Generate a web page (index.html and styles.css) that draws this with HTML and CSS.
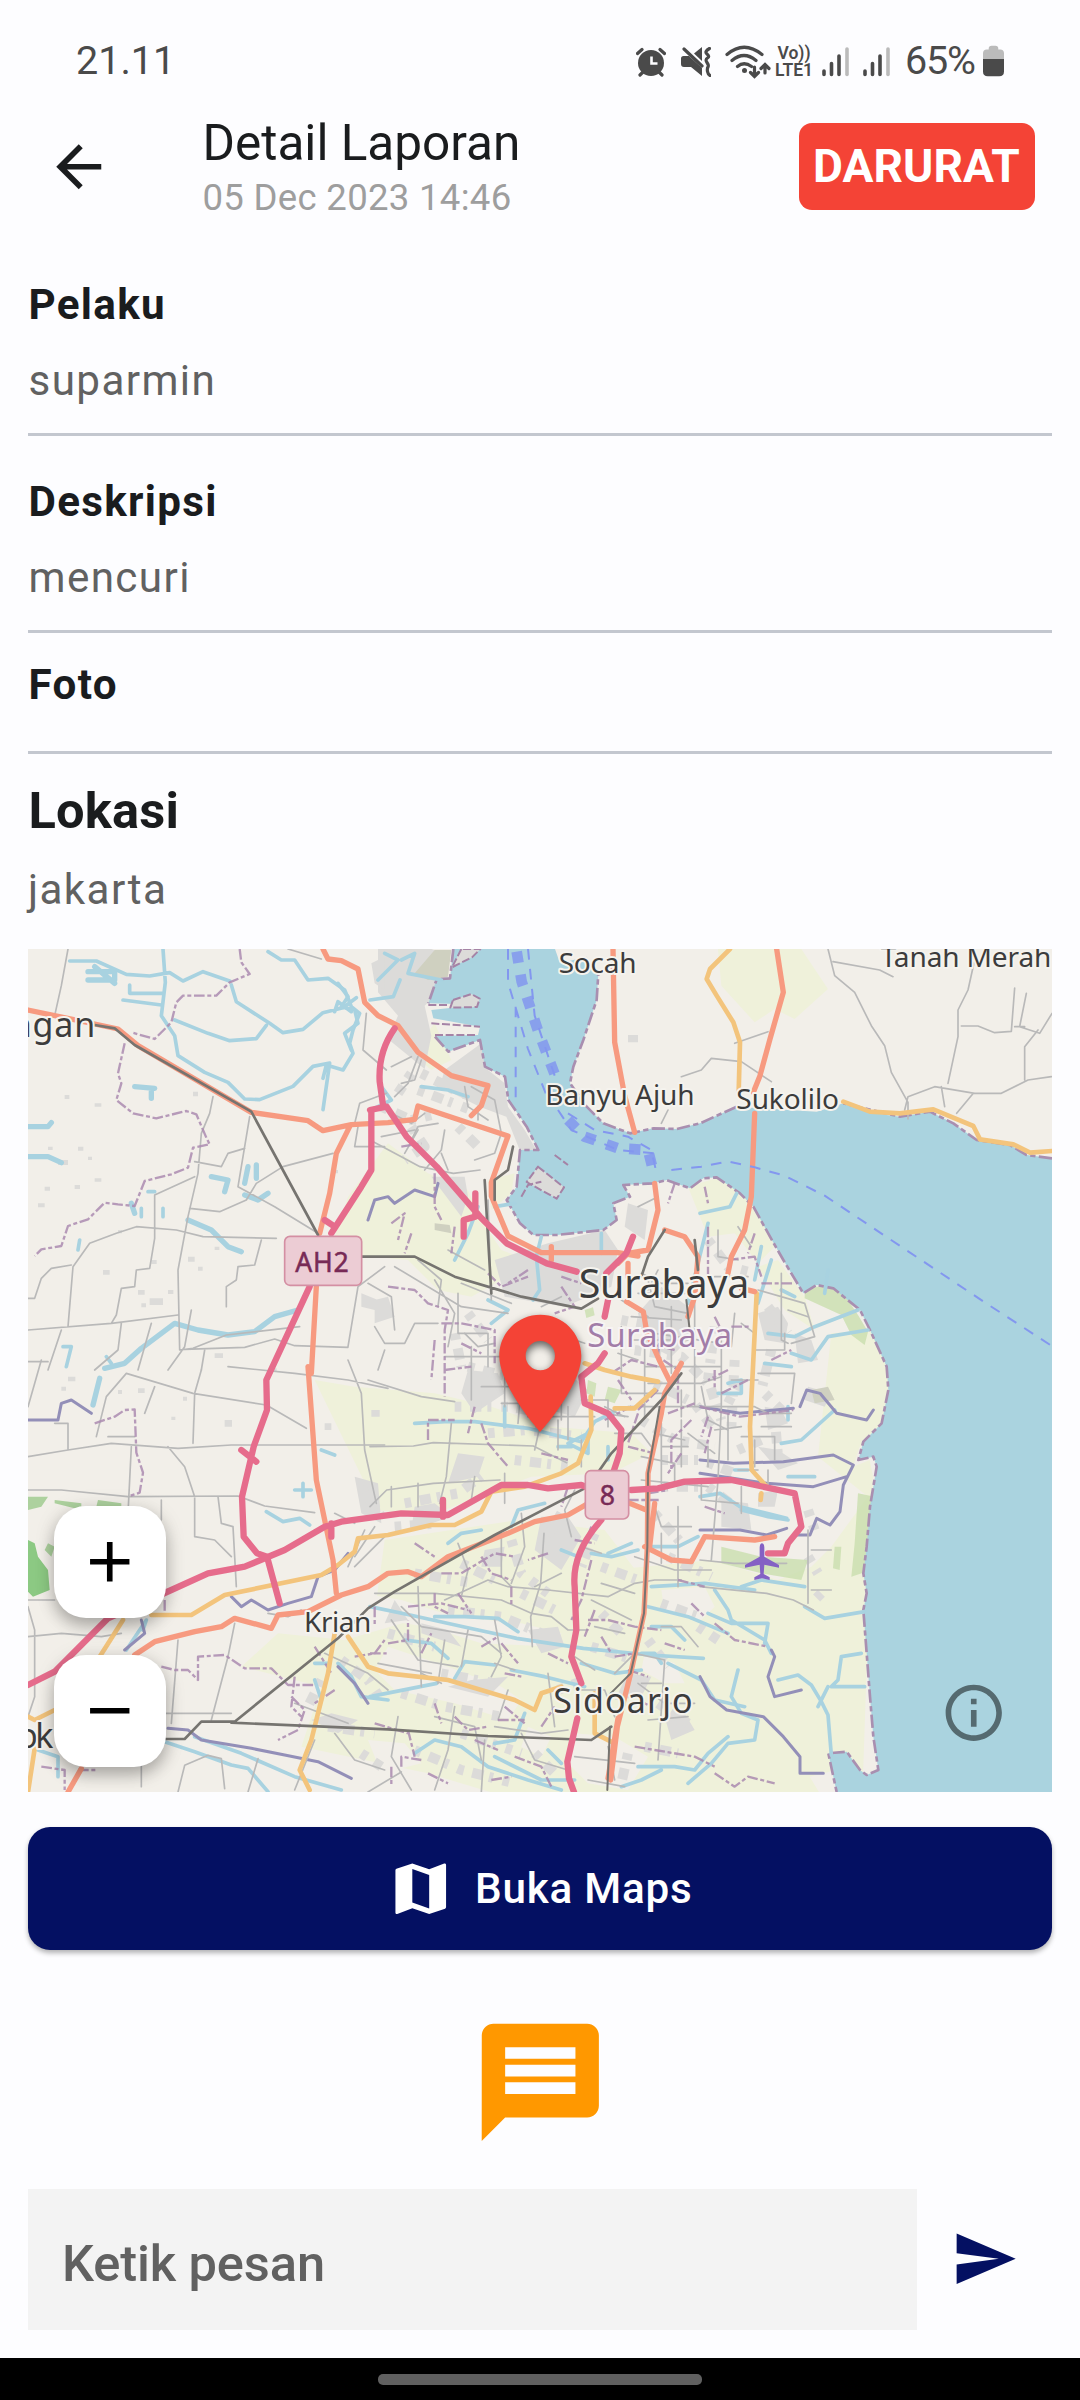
FILE: index.html
```html
<!DOCTYPE html>
<html lang="id">
<head>
<meta charset="utf-8">
<title>Detail Laporan</title>
<link rel="stylesheet" href="styles.css">
</head>
<body>
<div class="screen">
  <div class="status">
    <span class="clock">21.11</span>
    <div class="status-icons">
      <svg class="i-alarm" viewBox="0 0 30 30"><circle cx="15" cy="16" r="13"/><path class="ln" d="M1.500 6.500l4.500-4M28.500 6.500l-4.500-4M7 25l-3 3M23 25l3 3"/><path class="cut" d="M15.500 9.500v7h6"/></svg>
      <svg class="i-mute" viewBox="0 0 30 30"><path d="M0 11.500q0-2.500 2.500-2.500H8l13 12v8l-11-9H3q-3 0-3-3zM13 6.500L21 0v14z"/><path class="ln" d="M3 2l18 17"/><path class="ln" d="M28.500 1.500q-5.500 3-2.500 5.500t.5 4-.5 4.500 1 4.500-.5 4.500 2.500 4"/></svg>
      <svg class="i-wifi" viewBox="0 0 46 34"><path class="ln" d="M2 9.500Q19-5 37 9.500M7 15.500q12-10 24 0M12.500 21.500q6.500-5.500 14 0M29.500 22v9M25.500 27.500l4 4 4-4M40 28v-8M36 23.500l4-4 4 4"/><circle cx="19.500" cy="25.500" r="2.500"/></svg>
      <div class="volte"><span>Vo))</span><span>LTE1</span></div>
      <svg class="i-sig" viewBox="0 0 28 30"><path class="bar" d="M2 24v3.500M9.500 16.500v11M17 9v18.500"/><path class="bar dim" d="M25 2v25.500"/></svg>
      <svg class="i-sig second" viewBox="0 0 28 30"><path class="bar" d="M2 24v3.500M9.500 16.500v11M17 9v18.500"/><path class="bar dim" d="M25 2v25.500"/></svg>
      <span class="pct">65%</span>
      <svg class="i-bat" viewBox="0 0 22 32"><path fill="#bbb" d="M6 3q0-3 3-3h4q3 0 3 3v1h2q4 0 4 4v6H0V8q0-4 4-4h2z"/><path d="M0 14h22v13q0 5-5 5H5q-5 0-5-5z"/></svg>
    </div>
  </div>

  <header class="appbar">
    <svg class="back" viewBox="0 0 24 24"><path d="M20 11H7.830l5.590-5.590L12 4l-8 8 8 8 1.410-1.410L7.830 13H20v-2z"/></svg>
    <div class="titles"><h1>Detail Laporan</h1><p>05 Dec 2023 14:46</p></div>
    <span class="badge">DARURAT</span>
  </header>

  <main>
    <section class="field"><h2>Pelaku</h2><p>suparmin</p></section>
    <section class="field second"><h2>Deskripsi</h2><p>mencuri</p></section>
    <section class="field photo"><h2>Foto</h2></section>
    <section class="place"><h2>Lokasi</h2><p>jakarta</p></section>

    <div class="map">
      <svg class="tiles" viewBox="0 27 3072 2529" preserveAspectRatio="none">
        <rect y="27" width="3072" height="2529" fill="#f2efe9"/>
        <!-- farmland -->
        <g fill="#eff1da">
          <path d="M1080 610l120 90 120 50 40 90 60 90 80 30-80 60-90 50-100-20-90-90-220-20V890l40-120z"/>
          <path d="M860 1320l120 20 240 20 170 40 180 60 240 20 60 60-120 60-240 10-160 60-150 60-150-20z"/>
          <path d="M1220 250l50 110-60 30-60-50zM2070 27h250l80 120-100 90-60-30-60 40-100-110zM1380 720l80-20-10 60-60 50z"/>
          <path d="M2410 1180l120-10 50 120 5 80-30 90-60 60-20 60 50-20 10 50-30 900 20 40-30 30-70-90-80 20 30 50H1400l-200-60-380-80 60-180-240-60 110-100 200 20 240-70 300-150 260 10 300-30 200 60 100-40 60-60 110-150-150-120z"/>
          <path d="M1980 740l100-30 100 80 60 130-50 50-70-90-80 10zM2190 980l60-20 80 110 30 100-90-60zM1070 1800l400-60 260 30 100 130-40 200-420 40-330-120z"/>
        </g>
        <!-- unplanted land between the fields -->
        <g fill="#f2efe9">
          <path d="M1000 1960l120 20 160 50 200 20 120 30-20 40-220-10-160-50-210-30zM1080 2120l180 60 160 60 60 40-40 60-160-50-180-40-60-60zM1640 2380l120 10 100 60-60 100-120-20-60-60zM1500 2360l70 30-30 60-60-30zM1900 1950l130-10 30 60-40 40-110-20zM1850 2140l90 30 30 60-60 0-70-40zM1020 2400l110 10 50 60-120 30z"/>
        </g>
        <!-- built-up areas -->
        <g fill="#dcdbd9">
          <path d="M1050 27h160l50 20-10 90-60 60 20 90-20 100-110-90 30-70-60-70zM1250 390l110-80 20 80 50 40 10 70 50 70 35 60h-50l-40-100-80-30-120-60zM1210 710l100 0 10 60-20 60zM1400 960l160-50 170-40 40 60-20 110-140 60-180-30zM1520 680l90 60-25 35-90-55zM1800 790l60 20-10 90-60-40zM1270 45l60-10-40 50zM1290 190l60-20v30l-80 5z"/>
          <path d="M1900 1040l80 60 10 90-60 60-80-40-20-90zM2190 1120l60-20 30 50-10 60-60-10zM2300 1180l50 20 20 60-60 10zM2340 1340l70 20-20 40-60-20zM2210 1400l50 10 20 40-60 20zM2190 1520l60 10 60 40-60 20zM2080 1680l80 10 10 80-90-10zM2190 1660l60-10-10 50h-50zM1290 1540l80 10-20 60-90 20zM1160 1700l60-10 50 40-120 40zM1540 1730l80 0 40 60-60 100-80-60zM1370 1830l60-10-10 60h-60zM1500 2070l90-10 20 60-70 20zM1180 2080l120 40-40-50-80-20zM1330 2220l110-10-60 60-120-30zM1910 2330l60-10 30 50-70 30zM980 1610l70 20 10 120-60-30zM1320 1290l90 10 20 60-90 60-40-60zM1040 1080l40-10 20 60-60 20zM1000 1060l50 20-10 30-40-10zM1620 1300l60 50-40 80-110-30zM1800 2200l70 10-30 60-80 10zM850 2340l60-20 80 20-60 40zM1100 1980l40 60-70 10z"/>
          <path d="M1030 70l40-20v100l-30-20zM110 465h14v12h-14zM200 490h20v10h-20zM90 660h30v15H90zM150 620h16v12h-16zM200 715h20v10h-20zM495 455h15v14h-15zM480 950h20v15h-20zM225 990h20v14h-20zM330 1050h20v14h-20zM365 1075h40v20h-40zM560 1240h25v14h-25zM120 1310h22v14h-22zM330 1345h20v14h-20zM590 1440h22v20h-22zM890 1450h20v20h-20zM1030 1410h25v20h-25zM910 690h20v10h-20zM1800 285h30v22h-30zM50 740h16v12H50zM140 735h16v12h-16zM30 790h20v12H30zM180 650h12v10h-12zM60 620h14v10H60zM370 960h16v12h-16zM510 980h14v12h-14zM420 1050h16v12h-16zM340 1090h14v12h-14zM560 920h14v10h-14zM270 870h12v10h-12zM100 1340h14v12h-14zM270 1350h12v12h-12zM465 1370h12v12h-12zM430 1430h12v10h-12zM730 1285h16v10h-16z"/>
        </g>
        <!-- scattered settlements -->
        <g class="blots">
          <path d="M1180 400l120 60 90 20M1170 450l160 60M1060 500l90 40 80-20M1150 560l40 60-60 40M1290 560l60 60M1150 400l-40 60"/>
          <path d="M1320 1280l120 30 90 60M1280 1400l160 0 120 20M1380 1480l120-10 160 20M1460 1560l170 20M1280 1180l20 100M1320 1120l60 80"/>
          <path d="M1780 1140l100 20 60 60M1820 1230l140 20 80 80M1880 1330l120 60 60 80M1840 1440l100 60 120 20M1900 1560l120 0 100 40M1900 1640l140 0 80 60M2060 1160l-20 160 40 120M2120 1260l-10 200M2220 1100l60 80M2230 1230l-30 120 60 60M2240 1430l10 120M2040 900l60 80 80 20M2130 1530l70-30"/>
          <path d="M1000 1640l60 90M1130 1690l160-30 80-60M1100 1760l130-10M1450 1800l30 100 80 60M1600 1720l-60 100M1480 1960l120 60M1300 1870l120 60M1160 1900l180 30M1260 2010l160 20 120 50M1080 2080l140 40M1120 2260l130 40 170 30M1240 2200l160 30M1300 2380l180 60M1160 2430l140 60 160 40M1520 2440l60 60M1590 2250l80-30M940 2160l80 60 40 60M880 2220l-40 80M900 2360l140 20M1000 2440l60 40"/>
          <path d="M1700 1780l-40 100M1720 1880l110 40M1720 2020l60 60M1690 2120l130 40M1880 1720l90 100M1920 1850l130 60M1900 1990l110 40M1860 2100l60 80M1890 2290l90 60M1850 2420l100 20M2130 1330l-30 60M2340 1710l20 60M2340 1850l30 50M2380 1960l-20 20M1800 2440l-20 90M2010 2060l60 40"/>
        </g>
        <g fill="#c9dfae">
          <path d="M2330 1050l60-15 60 30 40 60 30 50-10 40-40-30-30-60-110-50zM2490 1660l50 10-10 220-60 20 10-100z" opacity=".8"/>
          <path opacity=".8" d="M2080 1820l120 30 140 10-20 60-120-20-120-30zM1680 1320l25 10-5 40-25-10zM1740 1340l40 10-20 40-30-10zM1670 1110l25-8 5 24-25 8zM2420 1820l20 0-5 70-20-5z"/>
        </g>
        <path fill="#cfd0c0" d="M1160 100l60-70h50l-10 80-60 10zM1220 850l45 5 5 25-50-10zM2350 1350l50-10 20 40-60 10z"/>
        <g fill="#8cc983"><path d="M0 1800l20 10 10 40 30 40 5 60-50 20-15-15z"/><path fill="#add19e" d="M0 1670l60 0-20 30-40 10zM80 1680l80 10v20l-80-20zM210 1680l70 10v30h-80zM60 1810l20 10-10 30-20-20z"/></g>
        <!-- sea -->
        <path fill="#aad3df" d="M1276 27L1266 115 1226 118 1201 190 1290 192 1300 200 1210 210 1216 235 1356 260 1350 285 1221 288 1261 335 1356 300 1371 380 1431 410 1441 480 1496 560 1531 630 1476 630 1466 740 1436 780 1476 850 1516 885 1586 885 1726 870 1766 840 1756 790 1806 770 1786 735 1876 730 1916 720 1986 745 2026 715 2066 712 2136 760 2176 800 2226 890 2266 960 2326 1060 2366 1035 2416 1045 2496 1110 2526 1170 2576 1280 2581 1350 2561 1450 2506 1505 2491 1560 2536 1550 2546 1580 2526 1700 2516 1820 2506 1900 2516 1960 2506 2010 2516 2140 2526 2270 2536 2390 2551 2490 2516 2505 2496 2490 2456 2435 2401 2440 2426 2556H3072V655L2996 645 2946 615 2846 600 2776 550 2706 515 2616 530 2576 525 2446 490 2366 515 2126 500 2016 550 1946 567 1876 565 1806 580 1726 550 1676 500 1626 430 1636 380 1666 300 1706 180 1711 100 1676 50 1596 70 1581 27z"/>
        <g fill="#dcdbd9" stroke="#a583a6" stroke-width="6" stroke-dasharray="24 8"><path d="M1275 180l55-18 25 14-8 25-80 2zM1530 680l78 62-22 34-90-50zM1300 27l-28 55 60-30 25-25z"/><path fill="none" d="M1480 770l20-35 40-10M1580 645l40 30M1201 195h60M1210 250l146 10M1221 285h120"/></g>
        <path class="coast" d="M1276 27L1266 115 1226 118 1201 190M1221 290L1261 335 1356 300 1371 380 1431 410 1441 480 1496 560 1531 630 1476 630 1466 740 1436 780 1476 850 1516 885 1586 885 1726 870 1766 840 1756 790 1806 770 1786 735 1876 730 1916 720 1986 745 2026 715 2066 712 2136 760 2176 800 2226 890 2266 960 2326 1060 2366 1035 2416 1045 2496 1110 2526 1170 2576 1280 2581 1350 2561 1450 2506 1505 2491 1560 2536 1550 2546 1580 2526 1700 2516 1820 2506 1900 2516 1960 2506 2010 2516 2140 2526 2270 2536 2390 2551 2490 2516 2505 2496 2490 2456 2435 2401 2440 2426 2556M3072 655L2996 645 2946 615 2846 600 2776 550 2706 515 2616 530 2446 490M2126 500L2016 550 1946 567 1876 565 1806 580 1726 550 1676 500 1626 430 1636 380 1666 300 1706 180 1711 100"/>

        <!-- rivers and canals -->
        <g class="river">
          <path d="M125 63h80l90 40 70 5 60-10 40 25 60-28 80 28M405 27l7 100-12 100 40 60 10 60 80 50 70 30 50 50 45 2 100-40 60-60 50-10-20 140M305 135v25h100M285 180l115 15M610 135l15 50 100 65 40 28 60-10 60-50 60-15 40-30M440 240l100 40 65 22 80-6 30-40M720 35l40 25 40 0 40 60 60-5 50 35 20 50 25 20-20 50-10 40 10 30-30 50-50-15-10 40M920 215l10-30 40 30"/>
          <path stroke-width="16" d="M0 560h60l10-12M0 650h60l40 18M180 95h80v25h-80M200 80l60 50M320 440l60 5M370 455v20M230 1285l60-15 50-45 100-75 70 20 90 15 80-10 60-45 70-20M215 1315l-20 80M550 710l50 10-10 35M480 840l70 30 50 50 40 15M660 680l-10 50M685 675v40M650 765l40 15 30-20M320 820l-10-30"/>
          <path d="M930 130l30 40-20 30 40 10 10 40-40 30 20 50M105 1220h25l-15 60M155 900l-5 30M340 805v25M405 805v25M360 755h20M250 1270l-15-20M715 1715l50 30 50-10 30 20M800 1650l50 0M825 1630v40M880 1530l40 15M345 2070l10-30-60 90M410 2405l90 30 110 40 50 10 60 70M500 2390l140 50 160 70 140 40M30 2430l60 20v60"/>
          <path d="M1050 120l60-60-40-20M1120 60l40-20-20 60 100 20M1026 180l70-10 20-50M1180 440l80 10 60 20M1060 440l30 40-60 30M1350 800l-30 80-40 80M1540 890l-15 60 10 100-20 30M1400 800l60-10M1380 1080l60 30-50 40M1720 880v60M1980 1090l60-240M2016 820l90-20 20-40M2400 990l-10 70M2230 960l-40 130M2220 1180l80 10 60-30 130-50M2290 1240l60 20 50-70 120-20M2200 920l-20 100M2260 1050l40 20"/>
          <path d="M1160 1450l90-5 90 0 160 20 160 40 40-60 60-30M1620 1510l60 30v-60zM2100 1330l40-10v40M2210 1270l80 10M2260 1510l60-10 100-90M2280 1400v40M2016 1670l60-10 60 40 80 20 60 15M2140 1710l80 20 60 10M2120 1590l40 0M2140 1360h-70M2280 1610h80M1260 1810l40-30 60-10M1450 1760l20-50 80-20M1600 1830l50 20M1690 1840l60 10 80-20M1870 1940l160-10 150 20M2140 1940l60-20 130 20M2060 1950l40 60 10 30 100 60 20 40M2040 2020l70 30h110l-10 60M2330 2000l60 35 120-20M2440 2150l60-10M2440 2150l-10 70-20 20h100M2400 2240l-30 60M2250 2220l60-15 40 30 30 50 20 40 10 120M2130 2190l-20 80 30 50 50 20-10 60-80 10-50 60-70 60"/>
          <path d="M1026 2000l120 25 180 40 140 30 200 30 200 20 160 10M1220 2030l90 0 100 5 60 40M1130 2100l80 10 50 45M1280 2215l30-50 90 10M1450 2190l100 20 120 30M1026 2270l200-40M1400 2410l60-10 30-80M1160 2440l60-40 80 20 80 60 120 40 100 30M1400 2450l80 40 60 30 100 0M1860 2000l120 30 120 50M1660 2170l100 30 80-10M1740 1560v-40M1870 1820l80 0 60-30M1920 2170l100 50 40 60 90 20M1840 2140l40 0 20 30M1830 2480l110 0 60 10 40-50 60-50M1780 2540l60-20 60-30M930 2170l40 40 30 60 80 10M860 2170h40M860 2220l20 60M1590 1520h40M1740 1840l70-30M1560 2430l40 40M1870 2060l60 0 40 40M1540 1440l30-60M1430 1400v60"/>
        </g>
        <g class="river mixed"><path d="M0 1440h90l10-50 30-10 60 40M340 2040l10 40-60 50M610 1970l30 30 30-20 50 30 60-20 70-20 20-60 50-20 40-50M420 2365l60 5 40 30 150 25 100 20 100 20 100 50M930 2180l50 50 40 60M1020 840l20-60 40-10 20 20 60-40 60 20 10-40M2316 1400l20-50 40 10 50 60 90 20 20-30M2016 1560l100 10 150-5 150-20 60 30-30 60-10 80-30 40-40-20-20 50-50 0M2016 1600l200 30 140 10 100-30M2016 2210l30 60 50 40 110 20 60 60 50 60 0 50 70 0M2230 2130l10 20-20 60 20 60 80-20M2016 1770l120 0 80 15 60-20M2016 1400l120 20 160-15"/></g>

        <!-- minor roads -->
        <g class="minor">
          <path d="M120 27l-20 110-20 90M780 27l100 30M1015 220l-10 110 70 60M555 470l-10 50-25 60-10 120-30 130-30 160 5 240 40-5 100-40 220-25M665 530l-20 120-15 90 110 60 130 80M915 640l-150 40-80 50-30 50-80 35-90-10M500 665l80 15 20-40 50-15M500 710l-120 55v130l-15 90-40 5-5 50-40 5-15 80-15 25M0 1170l250-20 200-25M120 1160l15-180 50-70 80-30 60-20 120 10 80 20 220 5M0 1075l20 0 20-60 30-30 60-10M700 900l-20 75-50 5-5 40-30 20v60M60 1290l40-120M200 1290l70-60 10-80M330 1290l40-140M420 1290l50-70 20-110M470 1228l180-6 90-25 60 20 160 5M990 560l-10 60 90 0M1075 460l-80 30-15 60M960 1220l30-180 80-60M1050 1290l20-60M0 1265h60M530 1230l-10 60"/>
          <path d="M0 1400l40-140M205 1490l30-120 60-70 200 60 220 35 120 70M240 1490h80M0 1550l120-20v-80h-40M120 1530l130-20 200 15 160-10h460M310 1520l-10 200M350 1420l30-80M520 1290l-20 70-5 150M600 1280l200 20 160 20 120 25M960 1260l40 100 10 170 35 160M0 1650l100 0 200 20 330-2 80 30 150 20M420 1520l50 60 30 90 0 120 60 10 50 50M570 1670l10 80 35 10 10 180M400 1680v60M0 1980h80M0 2090l100-10 120 10 60-10M620 2050l-20 100-50 190M450 2100l-20 250M0 2000l20 70 0 200-20 60M340 2380v160M410 2320l200 0M450 2556l20-80 70-30 40 10 10 90M660 2556l30-100M980 1750l-60-30"/>
          <path d="M1026 600l150 80 100 20 80-10M1090 380l60-30M1100 470l40-40 30-80M1180 360l-20 60-40 10M1190 690l50-60 10-60M1240 640l20 50M1150 600l20-40 60-10M1060 590l100-20M1540 1100l60-30M1490 1150l180 60M1960 410l60-20 30-35 90 10 90 60M1900 550l20-40M2120 310l100-35M2400 27l20 80 60 50 50 100 40 60 20 80 50 90 0 50M2415 65l140 25 40 20M2840 60l-20 90-30 60 0 80-30 140M2800 258l50 0 50 20 50-4 10-130M2995 160l-20 100 60 20 37-60M2990 420l0-100 40-50M2630 510l10-40 80-30 120 20 80 0 80-40 70-10M2740 440l10 60M2836 460l-50 60M2960 260h30"/>
          <path d="M1260 930l110 60M1380 780l10 300M1040 1160l30 50 60 0 30-60 70 0M1220 1020l60 100-20 100M1290 1060v120h90v100M1250 1250h170M1100 980l200 120 140 20M1020 1320l160 50 100 15M1270 1450l-15 160-20 80M1026 1520l130-2 60-10 300 10 100 50M1026 1700l50-50 140-20 200-10M1540 1340l60-20v120M1500 1430h200M1560 1290v80M1548 1780l-10 150-30 100 5 90M1170 1940l10 300M1400 2170l60 20M1250 1980l130-60 60 20 120 10 180 20 80-40 60-10h80M1040 1960l180 0 200 20 90 40 60 10 50 40h60M1180 2200l60 30M1660 1820l60 20M1640 2450l180 20M1760 2200l60-60 90 20-20 300M1560 2200l20 160M1020 2556l100-60M1370 2400l-10 156M1640 2150l60 40M1900 2060l60 0 50 60M1950 1700v240"/>
          <path d="M1830 800l60-30M1780 1080l80 50M1840 1000l60 30 80 0M1800 1200h180M1780 1160v200h120M1850 1130v300M2000 1000v400M1930 1100v200M1880 1180l200 30M2120 1120l-10 100M2260 1000v200l20 10M2190 1050l140 40 30 100-70 20M2180 1230h90v-50M1850 1280h230M1800 1400h380l40 20h70M2080 1180v220l-10 220-20 240M2180 1500v80M2140 1490h100v70M2100 1420v140M1900 1450v180M1840 1620l200 20M2016 1860l100 10 160 0M2340 1770v220M2350 1830h60M2350 1950h60M2016 1940l200 20 80 20 60 30M2190 1300h110l-10 90M1900 1520l80 0M1960 1440v140M2060 1470l80-10M1660 1380h80v80M1620 1400v100M1720 1420l80 10"/>
          <path d="M1090 520l60 30 40-30M1130 640l40-70M1310 440l10 60 60 40M1330 440l70 40 20 100-20 60-60 20M1350 500v40M1300 1030l150 60M1170 960l70 60-10 80M1020 1030l70 40 10 100M1310 1180l40 40 50-10M1330 1220v160M1430 1270l0 130M1480 1330l-10 120M1360 1340h120M1420 1390h90M1590 1440l0 90M1660 1500v80M1540 1440l-20 90M1760 1480l80 0 30 40M1860 1020l20 80 100 20M1890 990l-30 60M1830 1060h140M1810 1130l150 10M1860 1330h160l60-20M1960 1350v80M2020 1340l20 100 60 30M1980 1480l80 60M1880 1480l90 20M2040 1520v60M1840 1550l100 20v60M2020 1620v60l110 10M2140 1640v80M1880 1700l20 60 90 0M2130 1590h60M2200 1460l90 0M2220 1640v-50M2140 1150l40 30M2280 1110l60 20M2110 1320h80M2130 860l40 60M2070 870v80l60 10M2060 1010l100 0M1770 1240l60 20M1730 1400l60 30M1640 1650l-30 60 20 80M1430 1600l0 90M1340 1610l-10 70M1170 1630l0 70M1090 1640v60"/>
          <path d="M1290 1810l30 80-20 80M1420 1780l0 130 30 30M1480 1720l10 100-40 110M1600 1900l-80 40M1120 2000l60 60 180 30 60 50M1090 2040l80 120 120 20M1320 2070l-20 110M1400 2040l20 110-30 60M1250 2100l-20 130M1050 2170l160 30M1440 2250l-30 90M1220 2330l120 30 20 100M1110 2330l-20 120 60 100M1280 2300l-20 130-40 120M1400 2360l140 20 80-10M1480 2380l40 80 100 30M1640 2250l90 0 30 80M1820 1850l120 40 110 0M1900 1780v90M1720 1930l100 30M1690 1980l120 60M1700 2060l90 20M1830 2230l80 60 90 0M1860 2340l120-10M1900 2230l-60 0M1680 2520l110 20M1740 2420l20 100M860 2400l-60 150M920 2380l60 80 90 30M800 2290l160 60M890 2140l130 60 60 50M1010 1770l-50 110M1040 1760l-60 90M1070 1790l-90 90M720 2020l60 10 40-20"/>
        </g>
        <g class="border">
          <path d="M635 27l5 40 25 35-60 25-40 40h-100l-20 20-15 60-50 50-70-20M290 310l-20 90 10 30-15 50 50 40 70 15 90-22 30 10 30 70 10 20-50 10-15 60-50 20-80 20-30 75-50-5-40-5-50 50-60 20-20 60-60 10-20 20M200 1450l60-20 30-20 30-2 5 130 20 60-10 60-30 10M400 2180l40 10h40l30 30 0-70 80-5 60 40h80l50 50 80 0M800 2210l-10 90 30 30M1026 2140l50 0M410 1980v40M40 2480l70 10v60M150 2490h60M790 2270l40 40-20 60-60 30"/>
          <path d="M1220 700v100l20 40M1080 1040l80 10 40 40 60 20-10 60 0 200M1200 1500v-60h80M1380 1000l40 40 80-30M1240 1150l60 0 100 20 0 100M1360 1450l20 60 60 70M1540 1540l80 20M1160 1810l60 40M1220 1960l0 40 40 20M1240 1900l60 0 100-60 60 10M1140 2000l100-10 80 20M1080 2110l60-10 0-60M1420 2110l50 60M1450 1940l0 60M1560 2140l60 30M1690 1860l-30 120-30 60M1680 2040l60 0 80 20 80 10M1800 2190l60 20M1820 2420l60 10 120 20 60 30M1120 2480l0-30 60 10M1140 2370l20 80M1460 2450l80 30 30 60M1430 2200l50 10M1540 2360l40-60M2060 2050l60 50 100 20M2060 2500l60 40 40-30 80 20M1730 1440l80-40M1750 1300l60-40 80 20M1830 1420l-30 90M1900 1150l-10 100 60 40v100M1800 1520l80 20M1990 1440l-60 60v90M2080 1360l80-40M2110 1160h60M2100 960l80-10 20 60M2180 880l-20 60M2200 1030h100M2040 860l0 150M2016 1400l120 30 160-20M2050 1460l-20 80M1940 730l-20 60M2030 740l10 50M1600 1040l40 60-60 20M1500 990l-60 40M1890 1350l-60 60M1410 2340l80 0M1740 1680l160 0M1690 1760l-30 80M1950 1920l80 20"/>
          <path d="M1120 620l60-10M1090 850l40-30-20 80M1150 880l-20 60M1280 860l-10 80M1220 1200l-10 120M1250 1290l80-10M1300 1210l60 30M1340 1400l-20 80M1600 1010l60 20M1770 1320l40 60M1860 1210l80 20M2060 1130l30 60M2100 1290l-60 30M2060 1290v60M2230 1260l60-30M1920 1420l80-30M2040 1430l-20 60M1960 1540l-40 60M1860 1660l60-10M2030 1700l60 20M1620 1640l-20 60M1640 1800l60 10M1560 1840l-60 20M1360 1850l30 50 60 20M1290 1960l40 60M1180 2140l30-60M1360 2120l50-30M1430 2300l60 50M1340 2400l70 30M1280 2330l40 40 60-10M1220 2290l20 60M1200 2500l60 30M1090 2480v60M1040 2350l100 30M1390 2520l60-10M1720 2090l30 50M1830 2280l40 20M1760 2150l60-10M1910 2110l60 20M1990 1990l40 40M1700 2010l-30 80M860 2120l50 80M920 2250l-60 40M980 2150l60-10 30-40M1040 2000v60"/>
        </g>
        <!-- secondary -->
        <g class="sec">
          <path d="M2106 27l-60 60-10 30 30 50 50 80 20 60-4 150M2446 485l80 30 90 5 100-12 120 50 20 40 100 15 50 25 66-5M2186 1060l-10 200-10 200 5 130 45 50M2200 1660l-2 20"/>
          <path d="M370 2025h120l100-60 290-60 50-30 50-40 10-40 90-10 130-30h70l80-40 30-60 100-15 110-40 50-30 40-100-2-100M285 2040l-70 110M920 2080l-20 120-50 200-35 90 30 60M960 2090l60 90 60 20 180 20 200 60 60 30 20-50 60-20M1700 2260v120l60 30M1670 1270l60 20 80 20 80 15M1760 1405h60l60-55M0 2330l20 10 60-30M0 2556l20-130"/>
        </g>
        <!-- primary -->
        <g class="pri">
          <path d="M0 210l200 42 70 15 60 50 340 200 170 25 45 30 85-18 110-6 80-10 10-40 60 20 210 70-50 140 0 40 50 120 100 50h230l60 10M885 27l15 30 40 5 50 25 20 100 40 40 60 30 60 80 100 70 110 30-20 60-30 30M965 560l-40 80-20 120-30 120M865 1040l-15 260M1755 27l5 280 30 160 30 110M2246 27l20 130-40 140-30 110-20 50M2180 520l-10 250-20 100-40 80-10 50M1570 920v40"/>
          <path d="M840 1280l25 340 50 240 10 100M320 2145l60-40 120-30 80-15 40-25 110 30 20-40 90-10 100-50 80-25 60-40 60-5 40 15 80-60 180-70 80-35 100-20 70-40M1880 1690l-15 130M1850 1820l80 40 60 5 40-75 150 10 60-10M1880 730l10 80-30 120-60 10-30 30M1910 870l60 20 40 60-10 120-20 60M1796 1085l50 30 10 60 40 90 30 60M1960 1270l-50 90-10 60-40 180-2 220-10 200-40 180-40 160-20 160M1770 2335l-30 180M1805 1690l50 20M120 2556l40-70M2140 1045l40 10M1800 970v40"/>
        </g>
        <!-- railways -->
        <g class="rail"><path d="M200 255l60 10 60 50 350 200 200 370M1000 950h160l120 60 200 60 180 36 50-30M2000 900l10 90M1910 870l-50 80-20 60M1400 780l0-60 40-30 15-70M1370 720l20 340"/><path d="M1960 1300l-60 80-150 160-70 100-280 145-300 170-80 50-90 90-310 250-10 0h-90l-50 52h-60M610 2348l470 20 300 20 310 12 60-40"/><path stroke-width="6" d="M1895 1400l-35 200-2 220-10 200-40 180-60 60M1746 2360l-8 190M1975 1080l10 90"/></g>
        <!-- trunk motorway -->
        <g class="trunk">
          <path d="M1100 265q-50 70-45 160l10 70M1030 510v180l-30 50-90 140M1026 510l50-10 60 90 90 90 130 150 80 80 120 60 90 25M1342 760v70l-35 10v50M845 1040l-130 280 2 90-40 110-35 150 5 120 40 50 30 10 38 140M640 1530l45 35M890 840l30 20M1815 890l-20 50-60 60M1740 1080l-10 50M1730 1240l-20 30-50 40 10 80 70 30 40 50-5 70-20 60"/>
          <path d="M0 2235l80-40 160-160 190-85 110-50 110-20 120-50 120-70 50-15 180-25 140 5 160-90 80 0 60 10 100-10 100 40M910 1750v40M1245 1680v50M1810 1650l80-5 80-20 140-5 190 40 20 100-40 50-10 30h-50M1720 1740q-90 100-80 200l5 130-15 80 30 80M1648 2335l-30 130 5 50 15 41"/>
        </g>
        <!-- ferry lines -->
        <g class="ferry">
          <path d="M1440 27l0 100 60 200 60 150M1500 27l20 200 60 180M1463 200v280M1590 510l40 60 140 60 110 10M1620 520l80 50 100 20 70 40 18 80M1930 690l90-10 80-16 80 18 90 25 120 60 240 160 240 160 200 130"/>
          <path class="wide" d="M1466 35l15 90 50 150 50 130M1620 540l50 50 100 35 90 5 20 80"/>
        </g>
        <!-- airport -->
        <path fill="#8461c4" d="M2202 1810q6 0 7 12v28l44 25v8l-44-9-2 28 18 10v8l-23-5-23 5v-8l18-10-2-28-44 9v-8l44-25v-28q1-12 7-12z"/>
        <g class="shield"><rect x="770" y="889" width="231" height="147" rx="16"/><rect x="1672" y="1592" width="130" height="145" rx="16"/></g>
        <g class="ref"><text x="802" y="995" textLength="160">AH2</text><text x="1715" y="1695" textLength="46">8</text></g>
        <g class="town">
          <text x="1592" y="100" textLength="234">Socah</text>
          <text x="1552" y="495" textLength="448">Banyu Ajuh</text>
          <text x="2125" y="508" textLength="308">Sukolilo</text>
          <text x="2558" y="80" textLength="512">Tanah Merah</text>
          <text x="828" y="2076" textLength="202">Krian</text>
        </g>
        <g class="town big">
          <text x="-52" y="290" textLength="254">ngan</text>
          <text x="-32" y="2423" textLength="108">ok</text>
          <text x="1576" y="2320" textLength="418">Sidoarjo</text>
          <text class="capital" x="1652" y="1073" textLength="512">Surabaya</text>
        </g>
        <text class="city" x="1678" y="1222" textLength="434">Surabaya</text>
      </svg>
      <svg class="pin" viewBox="0 0 24 24"><path d="M12 2C8.130 2 5 5.130 5 9c0 5.250 7 13 7 13s7-7.750 7-13c0-3.870-3.130-7-7-7zm0 9.500a2.500 2.500 0 0 1 0-5 2.500 2.500 0 0 1 0 5z"/></svg>
      <div class="zoom">
        <span class="zbtn"><svg viewBox="0 0 24 24"><path d="M19 13h-6v6h-2v-6H5v-2h6V5h2v6h6v2z"/></svg></span>
        <span class="zbtn"><svg viewBox="0 0 24 24"><path d="M19 13H5v-2h14v2z"/></svg></span>
      </div>
      <svg class="info" viewBox="0 0 24 24"><path d="M11 7h2v2h-2zm0 4h2v6h-2zm1-9C6.480 2 2 6.480 2 12s4.480 10 10 10 10-4.480 10-10S17.520 2 12 2zm0 18c-4.410 0-8-3.590-8-8s3.590-8 8-8 8 3.590 8 8-3.590 8-8 8z"/></svg>
    </div>

    <div class="open-maps">
      <svg viewBox="0 0 24 24"><path d="M20.500 3l-.16.03L15 5.100 9 3 3.360 4.900c-.21.07-.36.25-.36.48V20.500c0 .28.22.5.5.5l.16-.03L9 18.900l6 2.100 5.640-1.900c.21-.07.36-.25.36-.48V3.500c0-.28-.22-.5-.5-.5zM15 19l-6-2.110V5l6 2.110V19z"/></svg>
      <span>Buka Maps</span>
    </div>
    <svg class="chat" viewBox="0 0 24 24"><path d="M20 2H4c-1.100 0-1.990.9-1.990 2L2 22l4-4h14c1.100 0 2-.9 2-2V4c0-1.100-.9-2-2-2zM6 9h12v2H6V9zm12 5H6v-2h12v2zm0-6H6V6h12v2z"/></svg>
    <div class="compose">
      <div class="input">Ketik pesan</div>
      <svg class="send" viewBox="0 0 24 24"><path d="M2.010 21L23 12 2.010 3 2 10l15 2-15 2z"/></svg>
    </div>
  </main>
  <div class="navbar"><span></span></div>
</div>
</body>
</html>
```
FILE: styles.css
```css
* { box-sizing: border-box; }
body { margin: 0; background: #fdfdff; font-family: Roboto, sans-serif; color: #1a1c1e; }
h1, h2, p { margin: 0; font-weight: 400; }
svg { display: block; flex: none; }
.screen { width: 1080px; height: 2400px; display: flex; flex-direction: column; overflow: hidden; }

.status { height: 120px; padding: 35px 76px 0 76px; display: flex; justify-content: space-between; align-items: flex-start; color: #4a4a4a; }
.clock { font-size: 39.5px; line-height: 51px; }
.status-icons { display: flex; align-items: flex-start; fill: #4a4a4a; }
.status-icons .ln { fill: none; stroke: #4a4a4a; stroke-width: 3.2; stroke-linecap: round; }
.status-icons .cut { fill: none; stroke: #fdfdff; stroke-width: 2.6; }
.i-alarm { width: 30px; height: 30px; margin: 12px 15px 0 0; }
.i-mute { width: 30px; height: 30px; margin: 12px 14px 0 0; }
.i-wifi { width: 46px; height: 34px; margin: 10px 4px 0 0; }
.volte { width: 38px; margin: 10px 9px 0 0; display: flex; flex-direction: column; align-items: center; font-size: 17.5px; line-height: 17px; font-weight: 600; }
.i-sig { width: 28px; height: 30px; margin: 12px 13px 0 0; }
.i-sig.second { margin-right: 14px; }
.bar { stroke: #4a4a4a; stroke-width: 3.6; stroke-linecap: round; }
.bar.dim { stroke: #bbb; }
.pct { width: 70px; font-size: 39.5px; line-height: 51px; letter-spacing: -1.2px; margin-right: 8px; }
.i-bat { width: 21px; height: 32px; margin-top: 10px; }

.appbar { height: 134px; padding-left: 45px; display: flex; align-items: flex-start; }
.back { width: 67.5px; height: 67.5px; margin-top: 13px; fill: #1a1c1e; }
.titles { margin-left: 90px; width: 596px; white-space: nowrap; margin-top: -7px; }
.titles h1 { font-size: 49.5px; line-height: 60px; }
.titles p { font-size: 36.56px; line-height: 44px; color: #9e9e9e; margin-top: 3px; letter-spacing: .3px; }
.badge { width: 236px; height: 87px; margin-top: 3px; border-radius: 13px; background: #f44336; color: #fff; font-size: 46px; font-weight: 700; line-height: 87px; text-align: center; letter-spacing: .1px; }

main { flex: 1; padding: 26px 28px 0; display: flex; flex-direction: column; }
.field { height: 156px; border-bottom: 3px solid #c3c7cf; }
.field h2, .field p, .place p { font-size: 42.2px; line-height: 50px; letter-spacing: 1.3px; }
.field h2, .place h2 { font-weight: 700; text-indent: .5px; }
.field p, .place p { margin-top: 26px; color: #616161; letter-spacing: 1.4px; text-indent: .5px; }
.field.second { height: 197px; padding-top: 41px; }
.field.second p { margin-top: 26px; }
.field.photo { height: 121px; padding-top: 27px; }
.place { height: 195px; padding-top: 27px; }
.place h2 { font-size: 50.6px; line-height: 60px; letter-spacing: .2px; }
.place p { margin-top: 24px; text-indent: 0; }

.map { position: relative; height: 843px; overflow: hidden; }
.tiles { width: 1024px; height: 843px; }
.tiles path { stroke-linejoin: round; }
.blots path { fill: none; stroke: #dcdbd9; stroke-width: 30; stroke-dasharray: 20 26 34 18 12 30; }
.coast { fill: none; stroke: #a98fb0; stroke-width: 8; stroke-dasharray: 40 10 16 10; }
.river, .minor, .border, .rail, .sec, .pri, .trunk { fill: none; stroke-linecap: round; }
.river { stroke: #a8d2e0; stroke-width: 11; }
.river.mixed { stroke: #938fb8; stroke-width: 9; }
.minor { stroke: #b9b9b9; stroke-width: 5; }
.border { stroke: #ab8bb0; stroke-width: 7; stroke-linecap: butt; stroke-dasharray: 32 8 12 8; opacity: .85; }
.rail { stroke: #767470; stroke-width: 8; }
.sec { stroke: #f3c47c; stroke-width: 14; }
.pri { stroke: #f79a80; stroke-width: 16; }
.trunk { stroke: #e66c8c; stroke-width: 19; }
.ferry { fill: none; stroke: #8397ef; stroke-width: 6; stroke-dasharray: 32 28; }
.ferry .wide { stroke-width: 32; stroke-dasharray: 34 36; opacity: .85; }
.shield { fill: #ecccd4; stroke: #d48fa3; stroke-width: 5; }
.tiles text { font-family: "Noto Sans", sans-serif; }
.ref { font-size: 80px; fill: #782a56; stroke: #782a56; stroke-width: 1.5px; }
.town { font-size: 84px; fill: #3c3c3c; stroke: #f5f3ee; stroke-width: 12px; paint-order: stroke; stroke-linejoin: round; }
.town.big { font-size: 102px; }
.town .capital { font-size: 118px; }
.city { font-size: 98px; fill: #a27da8; stroke: #f7f4f4; stroke-width: 12px; paint-order: stroke; }
.pin { position: absolute; left: 442px; top: 354px; width: 140.6px; height: 140.6px; fill: #f44336; filter: drop-shadow(0 4px 4px rgba(0,0,0,.6)); }
.zoom { position: absolute; left: 26px; top: 557px; display: flex; flex-direction: column; gap: 37px; }
.zbtn { width: 112px; height: 112px; border-radius: 32px; background: #fff; display: flex; align-items: center; justify-content: center; box-shadow: 0 8px 16px rgba(0,0,0,.26), 0 2px 22px rgba(0,0,0,.1); }
.zbtn svg { width: 67.5px; height: 67.5px; }
.info { position: absolute; left: 911.5px; top: 730px; width: 67.5px; height: 67.5px; fill: #556a70; }

.open-maps { margin-top: 35px; height: 123px; border-radius: 22px; background: #041062; color: #fff; display: flex; align-items: center; justify-content: center; font-size: 42.2px; font-weight: 500; letter-spacing: .8px; box-shadow: 0 3px 5px rgba(0,0,0,.3); }
.open-maps svg { width: 67.5px; height: 67.5px; fill: #fff; margin-right: 20px; }
.chat { width: 140.6px; height: 140.6px; margin: 62px auto 0; fill: #ff9800; }
.compose { margin-top: 36px; display: flex; align-items: flex-start; }
.input { width: 889px; height: 141px; background: #f3f3f3; padding: 45px 0 0 34px; font-size: 50.6px; line-height: 60px; font-weight: 500; color: #616161; letter-spacing: -.1px; }
.send { width: 67.5px; height: 67.5px; margin: 36px 0 0 34px; fill: #041062; }
.navbar { height: 42px; flex: none; background: #000; display: flex; justify-content: center; padding-top: 16px; }
.navbar span { width: 324px; height: 11px; border-radius: 5px; background: #606060; }
```
